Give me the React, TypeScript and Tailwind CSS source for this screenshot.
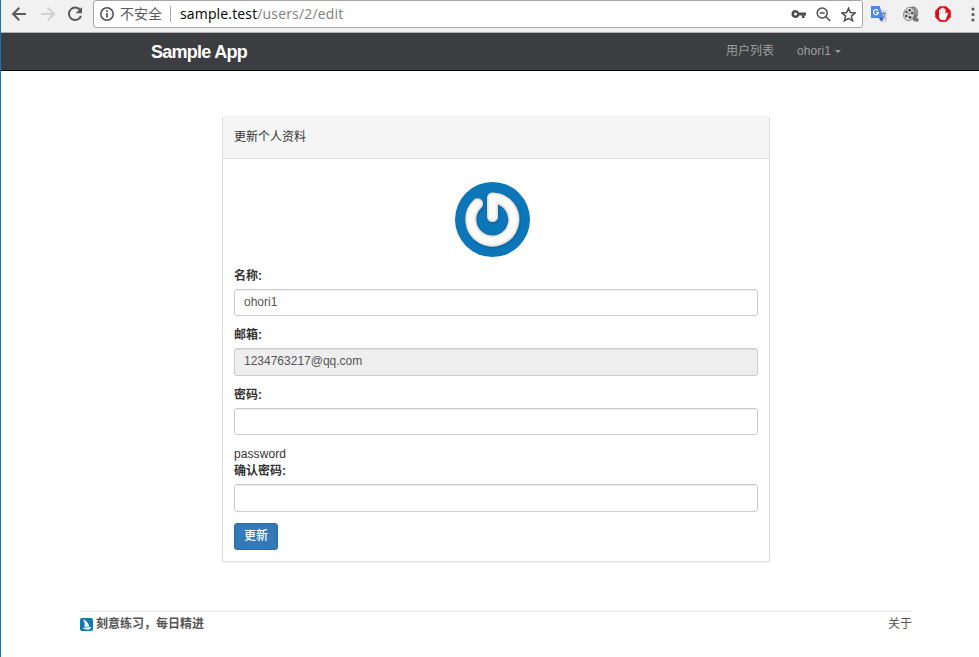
import type { ReactNode } from "react";

function Field({ label, className, labelClass = "", children }: { label: string; className: string; labelClass?: string; children?: ReactNode }) {
  return (
    <>
      <label className={`block h-[17px] text-[12px] leading-[17px] font-bold ${labelClass}`}>{label}</label>
      <div className={`rounded-[3px] border border-[#ccc] px-[9px] text-[12px] leading-[24px] text-[#555] shadow-[inset_0_1px_1px_rgba(0,0,0,0.075)] ${className}`}>
        {children}
      </div>
    </>
  );
}

function Toolbar() {
  return (
    <div className="flex h-[33px] items-start border-b border-[#b2aeb2] bg-[#f1f1f1]">
      <svg className="ml-[10px] mt-[6px] h-4 w-4 shrink-0" viewBox="0 0 16 16" fill="none" stroke="#5a5a5e" strokeWidth="2">
        <path d="M15 8H2.500M8.300 1.700 2 8l6.300 6.300" />
      </svg>
      <svg className="ml-[13px] mt-[6px] h-4 w-4 shrink-0" viewBox="0 0 16 16" fill="none" stroke="#d2d2d2" strokeWidth="2">
        <path d="M1 8h12.500M7.700 1.700 14 8l-6.300 6.300" />
      </svg>
      <svg className="ml-[11px] mt-[6px] h-4 w-4 shrink-0" viewBox="0 0 16 16" fill="none" stroke="#5a5a5e" strokeWidth="2">
        <path d="M13.200 4.200A6.200 6.200 0 1 0 14 9.800" />
        <path d="M15 1v6.300H8.700z" fill="#5a5a5e" stroke="none" />
      </svg>
      <div className="ml-[10px] flex h-[28px] w-[770px] shrink-0 items-center rounded-[3px] border border-[#a6a6a6] bg-white pl-[6px] pr-[6px]">
        <svg className="h-[14px] w-[14px] shrink-0" viewBox="0 0 14 14" fill="none" stroke="#4e4e50">
          <circle cx="7" cy="7" r="6.200" strokeWidth="1.500" />
          <path d="M7 6v4.500M7 3.300V5" strokeWidth="1.700" />
        </svg>
        <span className="ml-[6px] text-[14px] leading-[26px] text-[#5b5b5b]">不安全</span>
        <span className="ml-[8px] h-[16px] w-px bg-[#a6a6a6]" />
        <span className="ml-[9px] w-[164px] whitespace-nowrap font-['Open_Sans','Noto_Sans',sans-serif] text-[14px] leading-[26px] tracking-[0.160px] text-[#808080]">
          <span className="text-black">sample.test</span>/users/2/edit
        </span>
        <div className="flex-1" />
        <svg className="h-[14px] w-[15px]" viewBox="0 0 15 14" fill="#4e4e50">
          <path fillRule="evenodd" d="M4.500 3a4 4 0 1 0 3.700 5.500H11V11h2.500V8.500H15v-3H8.200A4 4 0 0 0 4.500 3zm0 2.500a1.500 1.500 0 1 1 0 3 1.500 1.500 0 0 1 0-3z" />
        </svg>
        <svg className="ml-[10px] h-[15px] w-[15px]" viewBox="0 0 15 15" fill="none" stroke="#4e4e50" strokeWidth="1.500">
          <circle cx="6.200" cy="6" r="5" />
          <path d="m9.700 9.500 4.500 4.500M3.700 6h5" />
        </svg>
        <svg className="ml-[10px] h-[15px] w-[15px]" viewBox="0 0 15 15" fill="none" stroke="#4e4e50" strokeWidth="1.500">
          <path d="m7.500 1.200 1.800 4.400 4.800.4-3.700 3.100 1.200 4.700-4.100-2.500-4.100 2.500 1.200-4.700L.900 6l4.800-.4z" />
        </svg>
      </div>
      <svg className="ml-[8px] mt-[6px] h-4 w-4 shrink-0" viewBox="0 0 16 16">
        <path d="M5 4h11v12H9z" fill="#d9d9dc" />
        <path d="M0 0h8.500l4.200 12H0z" fill="#4a86ee" />
        <path d="m8 12 4.700 0-2.200 3.500z" fill="#2b57b8" />
        <path d="M7 4.700A2.500 2.500 0 1 0 7.500 6.500H5" fill="none" stroke="#fff" strokeWidth="1.200" />
        <path d="M10 7.500h5M12.500 6v1.500M14 8q-1 3-3 4M11.500 9q1 2 3 3" fill="none" stroke="#71809b" />
      </svg>
      <svg className="ml-[16px] mt-[6px] h-4 w-4 shrink-0" viewBox="0 0 16 16">
        <ellipse cx="10" cy="7" rx="5.300" ry="6.500" fill="#777" />
        <path d="m11 10 5 3-1 3-5-1z" fill="#777" />
        <ellipse cx="6" cy="8" rx="5.300" ry="6.800" transform="rotate(15 6 8)" fill="#dadada" stroke="#777" strokeWidth=".8" />
        <g fill="#444">
          <circle cx="6.800" cy="4.300" r="1.300" /><circle cx="3.500" cy="6" r="1.200" /><circle cx="9.200" cy="7" r="1.300" />
          <circle cx="3.300" cy="10" r="1.300" /><circle cx="7" cy="11.300" r="1.400" /><circle cx="6" cy="7.800" r=".7" />
        </g>
        <path d="M10 2q3 2 3 6M12 2q3 3 2.500 7" fill="none" stroke="#bbb" strokeWidth=".7" />
      </svg>
      <svg className="ml-[16px] mt-[6px] h-4 w-4 shrink-0" viewBox="0 0 16 16">
        <path d="M4.800.2h6.400l4.600 4.600v6.400l-4.600 4.600H4.800L.2 11.200V4.800z" fill="#e20b17" />
        <path d="M4 8V4q.8-.8 1.500 0V2.600q.8-.9 1.600 0V2q.9-.8 1.700 0v.9q.9-.8 1.700 0V8l1.300-1.500q1.400-.3 1.200.9L10.600 14H5.800L4 11.500z" fill="#fff" />
        <path d="M5.700 4.500V8M7.300 3.500V8M8.900 3.500V8" stroke="#f0a0a4" strokeWidth=".4" />
      </svg>
      <svg className="ml-[20px] mt-[7px] h-[15px] w-1 shrink-0" viewBox="0 0 4 15" fill="#5a5a5e">
        <circle cx="2" cy="2" r="1.600" /><circle cx="2" cy="7.500" r="1.600" /><circle cx="2" cy="13" r="1.600" />
      </svg>
    </div>
  );
}

function Avatar() {
  return (
    <svg className="ml-[221px] h-[75px] w-[75px]" viewBox="0 0 75 75">
      <defs>
        <filter id="relief" x="-20%" y="-20%" width="140%" height="140%">
          <feDropShadow dx="0.500" dy="1" stdDeviation="0.800" floodColor="#064a7c" floodOpacity="0.600" />
        </filter>
      </defs>
      <circle cx="37.500" cy="37.500" r="37.500" fill="#0c76b9" />
      <g fill="none" strokeLinecap="round" strokeLinejoin="round">
        <path d="M22.600 21.800A21.500 21.500 0 1 0 37.500 16v18.500" stroke="#dcdbd7" strokeWidth="11" filter="url(#relief)" />
        <path d="M22.600 21.800A21.500 21.500 0 1 0 37.500 16v18.500" stroke="#ebeae8" strokeWidth="9.500" />
        <path d="M22.400 21.600A21.500 21.500 0 1 0 37.300 15.800v18.500" stroke="#fbfbfa" strokeWidth="7" />
      </g>
    </svg>
  );
}

export default function App() {
  return (
    <div className="h-[657px] w-[979px] overflow-hidden border-l border-[#1774b8] bg-white font-['Liberation_Sans','Noto_Sans_CJK_SC',sans-serif] text-[12px] text-[#333]">
      <Toolbar />
      <nav className="flex h-[38px] border-b border-[#080808] bg-[#3c3d41] text-[#9d9d9d]">
        <a className="ml-[150px] text-[18px] leading-[38px] font-bold tracking-[-0.740px] text-white">Sample App</a>
        <div className="flex-1" />
        <a className="leading-[36px]">用户列表</a>
        <a className="ml-[23px] mr-[138px] flex h-[36px] items-center">
          <span className="h-[36px] leading-[36px] tracking-[0.100px]">ohori1</span>
          <span className="ml-[4px] border-x-[3.500px] border-t-[3px] border-x-transparent border-t-[#9d9d9d]" />
        </a>
      </nav>

      <main className="ml-[221px] mt-[45px] h-[446px] w-[548px] rounded-[3px] border border-[#ddd] border-t-[#f0f0f0] shadow-[0_1px_1px_rgba(0,0,0,0.050)]">
        <h1 className="h-[42px] border-b border-[#ddd] bg-[#f5f5f5] px-[11px] text-[12px] leading-[40px]">更新个人资料</h1>
        <div className="px-[11px] pt-[23px]">
          <Avatar />
          <Field label="名称:" labelClass="mt-[11px]" className="mt-[4px] h-[27px]">ohori1</Field>
          <Field label="邮箱:" labelClass="mt-[11px]" className="mt-[4px] h-[28px] bg-[#eee]">1234763217@qq.com</Field>
          <Field label="密码:" labelClass="mt-[11px]" className="mt-[4px] h-[27px]" />
          <p className="mt-[11px] h-[17px] leading-[17px] tracking-[0.080px]">password</p>
          <Field label="确认密码:" className="mt-[4px] h-[28px]" />
          <button className="mt-[11px] block h-[27px] w-[44px] rounded-[3px] border border-[#2e6da4] bg-[#337ab7] text-[12px] leading-[23px] font-medium text-white">更新</button>
        </div>
      </main>

      <footer className="ml-[79px] mt-[49px] flex w-[832px] border-t border-[#e7e7e7] leading-[25px] text-[#555]">
        <svg className="mt-[6px] h-[13px] w-[13px]" viewBox="0 0 13 13">
          <rect width="13" height="13" rx="2" fill="#1479b3" />
          <path d="M3 1.200Q8.200 3.500 9.300 8.500L4.600 9Q5.600 5 3 1.200zM2.200 9.900 11.500 9l-1.700 2.200q-3.600.8-7.600-1.300z" fill="#fff" />
        </svg>
        <span className="ml-[3px] font-bold">刻意练习，每日精进</span>
        <div className="flex-1" />
        <a>关于</a>
      </footer>
    </div>
  );
}
